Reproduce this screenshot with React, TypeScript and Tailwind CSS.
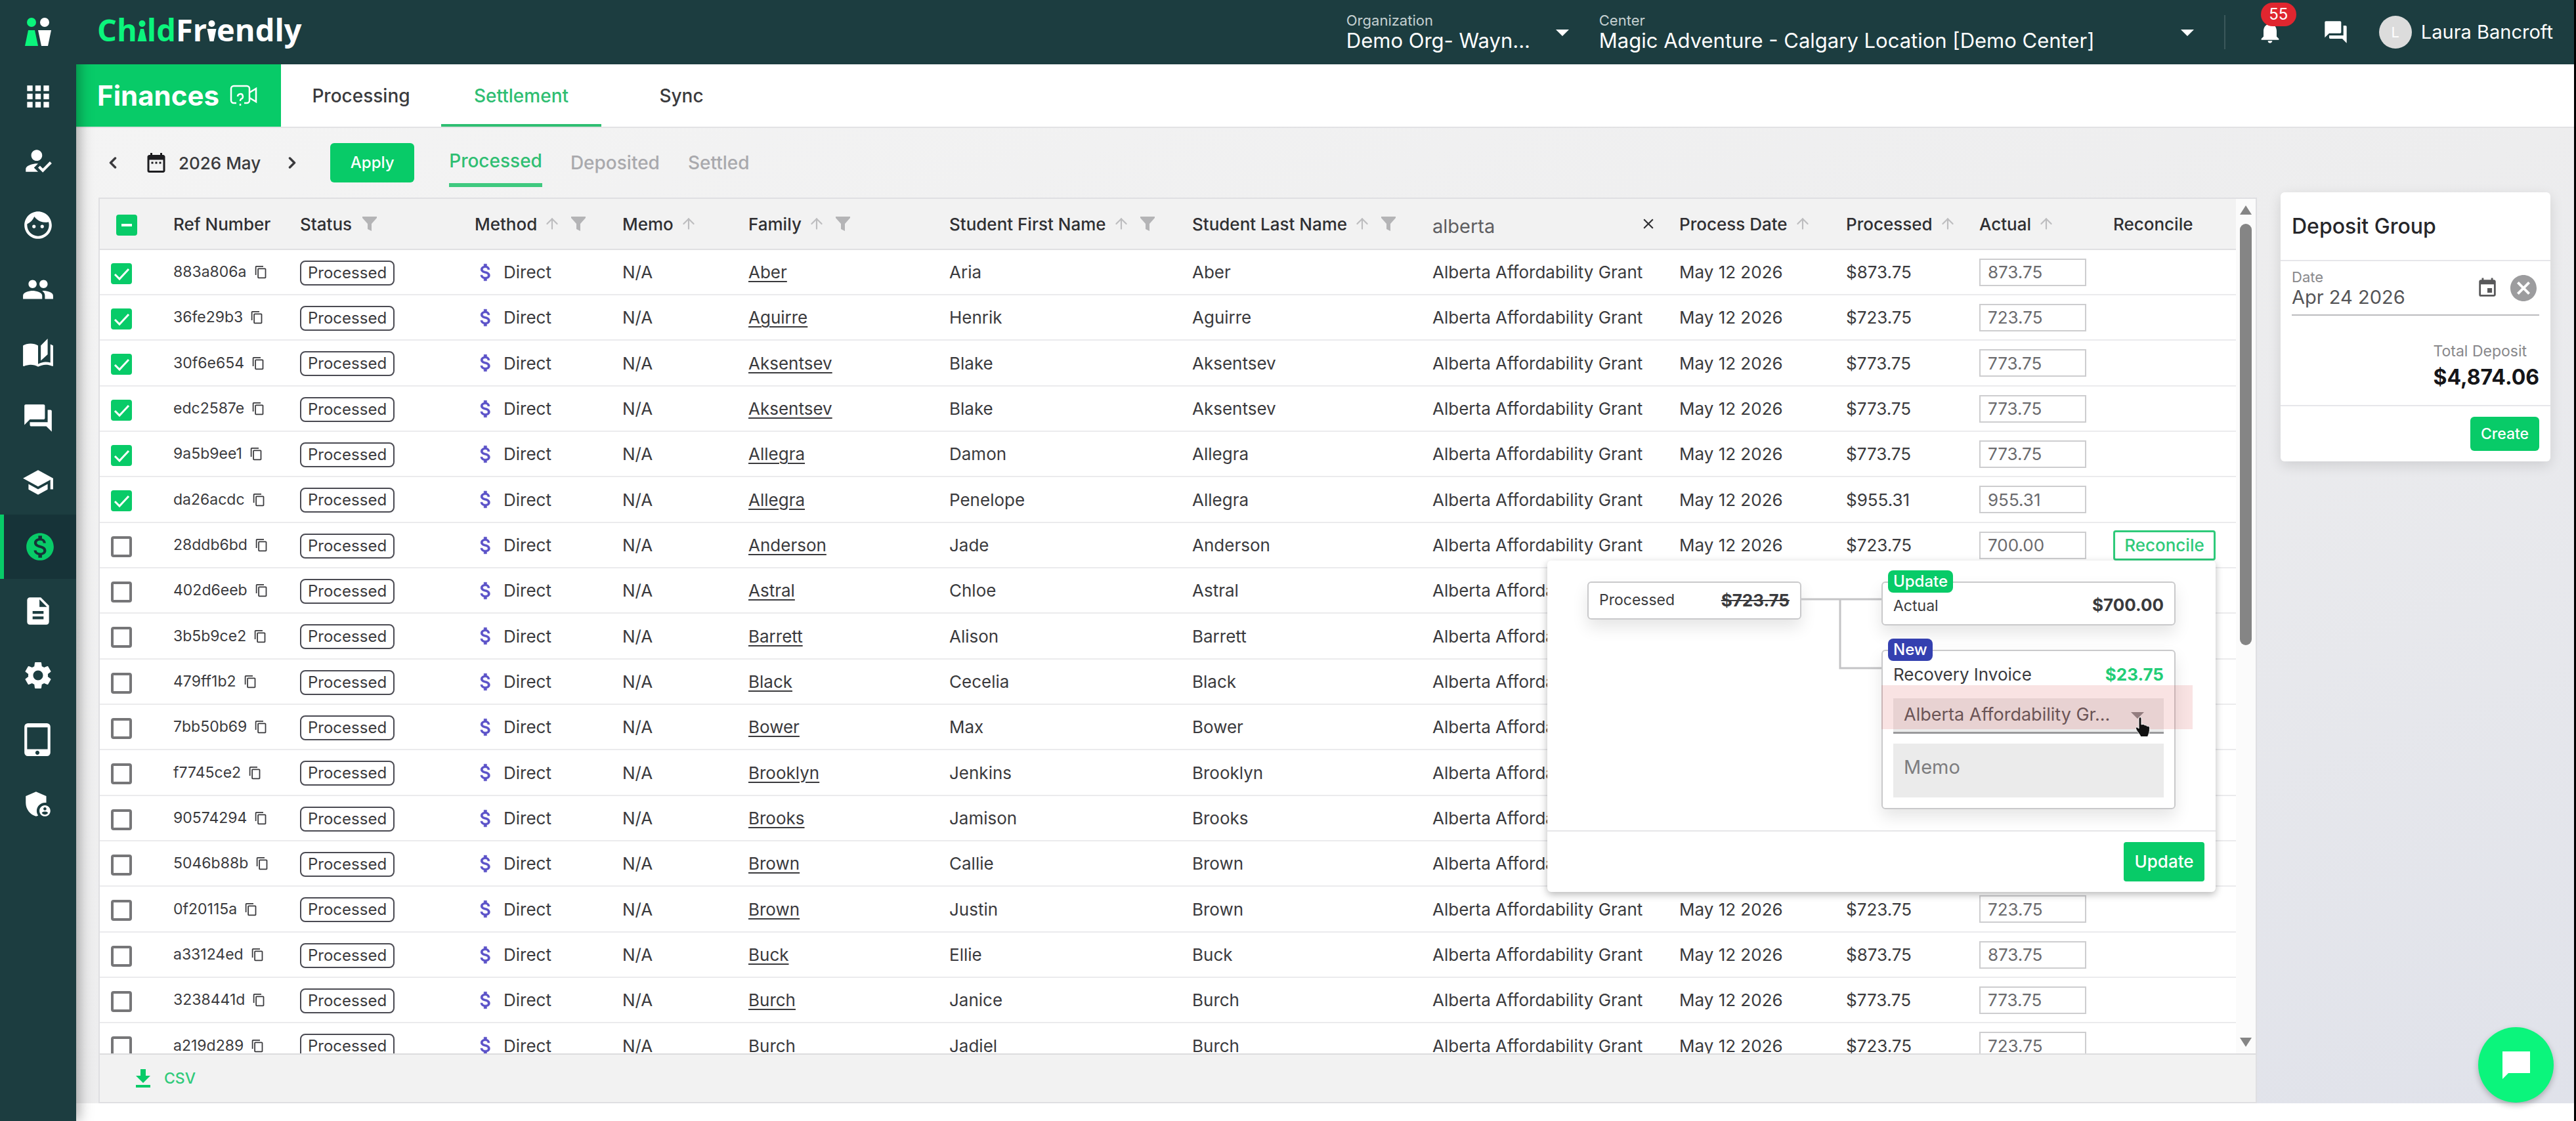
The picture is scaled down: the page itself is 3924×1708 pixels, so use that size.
import { useState } from "react";
import type { ReactNode } from "react";
import {
  MdAdminPanelSettings,
  MdApps,
  MdArrowDropDown,
  MdAutoStories,
  MdCancel,
  MdClose,
  MdContentCopy,
  MdDateRange,
  MdDescription,
  MdEvent,
  MdFace,
  MdForum,
  MdHowToReg,
  MdMonetizationOn,
  MdNotifications,
  MdPeople,
  MdSchool,
  MdSettings,
  MdTabletMac,
} from "react-icons/md";
import { ArrowUp, ChevronLeft, ChevronRight } from "lucide-react";

const navItems = [
  { label: "Dashboard", icon: MdApps },
  { label: "Attendance", icon: MdHowToReg },
  { label: "Children", icon: MdFace },
  { label: "Families", icon: MdPeople },
  { label: "Programs", icon: MdAutoStories },
  { label: "Messages", icon: MdForum },
  { label: "Education", icon: MdSchool },
  { label: "Finances", icon: MdMonetizationOn, active: true },
  { label: "Reports", icon: MdDescription },
  { label: "Settings", icon: MdSettings },
  { label: "Devices", icon: MdTabletMac },
  { label: "Admin", icon: MdAdminPanelSettings },
];

type Row = {
  id: string;
  family: string;
  first: string;
  processed: string;
  actual?: string;
  checked?: boolean;
};

const rows: Row[] = [
  { id: "883a806a", family: "Aber", first: "Aria", processed: "873.75", checked: true },
  { id: "36fe29b3", family: "Aguirre", first: "Henrik", processed: "723.75", checked: true },
  { id: "30f6e654", family: "Aksentsev", first: "Blake", processed: "773.75", checked: true },
  { id: "edc2587e", family: "Aksentsev", first: "Blake", processed: "773.75", checked: true },
  { id: "9a5b9ee1", family: "Allegra", first: "Damon", processed: "773.75", checked: true },
  { id: "da26acdc", family: "Allegra", first: "Penelope", processed: "955.31", checked: true },
  { id: "28ddb6bd", family: "Anderson", first: "Jade", processed: "723.75", actual: "700.00" },
  { id: "402d6eeb", family: "Astral", first: "Chloe", processed: "723.75" },
  { id: "3b5b9ce2", family: "Barrett", first: "Alison", processed: "723.75" },
  { id: "479ff1b2", family: "Black", first: "Cecelia", processed: "723.75" },
  { id: "7bb50b69", family: "Bower", first: "Max", processed: "723.75" },
  { id: "f7745ce2", family: "Brooklyn", first: "Jenkins", processed: "723.75" },
  { id: "90574294", family: "Brooks", first: "Jamison", processed: "723.75" },
  { id: "5046b88b", family: "Brown", first: "Callie", processed: "723.75" },
  { id: "0f20115a", family: "Brown", first: "Justin", processed: "723.75" },
  { id: "a33124ed", family: "Buck", first: "Ellie", processed: "873.75" },
  { id: "3238441d", family: "Burch", first: "Janice", processed: "773.75" },
  { id: "a219d289", family: "Burch", first: "Jadiel", processed: "723.75" },
];

function People({ className }: { className?: string }) {
  return (
    <svg viewBox="0 0 42 46" className={className} aria-hidden="true">
      <circle cx="11" cy="8" r="7" fill="#0bf57c" />
      <path d="M6 20h10l5 24H1z" fill="#0bf57c" />
      <circle cx="31" cy="8" r="7" fill="#fff" />
      <path d="M21 20h20l-5 24H26z" fill="#fff" />
    </svg>
  );
}

function Wordmark() {
  return (
    <div className="flex items-baseline pb-2 font-['Open_Sans',sans-serif] text-[47px] leading-[56px] font-bold text-white">
      <span className="text-[#0bf57c]">Ch</span>
      <svg viewBox="0 0 15 32" className="h-[32px] w-[15px]" aria-hidden="true">
        <circle cx="7.5" cy="5" r="5" fill="#0bf57c" />
        <path d="M5 13h5l4.500 19H.5z" fill="#0bf57c" />
      </svg>
      <span className="text-[#0bf57c]">ld</span>
      <span>Fr</span>
      <svg viewBox="0 0 15 32" className="h-[32px] w-[15px]" aria-hidden="true">
        <circle cx="7.5" cy="5" r="5" fill="#fff" />
        <path d="M.5 13h14L10.500 32h-6z" fill="#fff" />
      </svg>
      <span>endly</span>
    </div>
  );
}

function Dollar() {
  return (
    <svg viewBox="0 0 24 24" className="h-[34px] w-[34px] shrink-0" fill="#5b52c8" stroke="#5b52c8" strokeWidth="0.4" aria-hidden="true">
      <path d="M11.800 10.900c-2.270-.59-3-1.200-3-2.150 0-1.090 1.010-1.850 2.700-1.850 1.780 0 2.440.85 2.500 2.100h2.210c-.07-1.720-1.120-3.300-3.210-3.810V3h-3v2.160c-1.940.42-3.500 1.680-3.500 3.610 0 2.310 1.910 3.460 4.700 4.130 2.500.6 3 1.480 3 2.410 0 .69-.49 1.790-2.700 1.790-2.060 0-2.870-.92-2.980-2.100h-2.200c.12 2.190 1.760 3.420 3.680 3.830V21h3v-2.150c1.950-.37 3.500-1.500 3.500-3.550 0-2.840-2.430-3.810-4.700-4.400z" />
    </svg>
  );
}

function Funnel() {
  return (
    <svg viewBox="0 0 22 22" className="h-[22px] w-[22px] shrink-0" fill="#b4b4b6" aria-hidden="true">
      <path d="M0 0h22v2l-8 9v11l-6-3v-8L0 2z" />
    </svg>
  );
}

function Heading({ children, sort, filter }: { children: ReactNode; sort?: boolean; filter?: boolean }) {
  return (
    <th scope="col" className="p-0 text-left font-medium whitespace-nowrap">
      <span className="flex items-center">
        {children}
        {sort && <ArrowUp className="ml-2.5 h-[26px] w-[26px] shrink-0 text-[#bdbdbf]" strokeWidth={2} />}
        {filter && (
          <span className="ml-4">
            <Funnel />
          </span>
        )}
      </span>
    </th>
  );
}

function Checkbox({ label, checked, mixed, onChange }: { label: string; checked: boolean; mixed?: boolean; onChange: () => void }) {
  return (
    <span className="inline-grid align-middle">
      <input
        type="checkbox"
        aria-label={label}
        checked={checked}
        onChange={onChange}
        className="h-8 w-8 appearance-none rounded-[4px] border-4 border-[#767678] [grid-area:1/1] checked:border-[#08cb68] checked:bg-[#08cb68]"
      />
      {checked && (
        <svg viewBox="0 0 32 32" className="pointer-events-none h-8 w-8 [grid-area:1/1]" fill="none" stroke="#fff" strokeWidth="3" aria-hidden="true">
          {mixed ? <path d="M8 16h16" strokeWidth="4" /> : <path d="M6 17l7 7L27 9" />}
        </svg>
      )}
    </span>
  );
}

function Sidebar() {
  return (
    <nav className="relative z-10 flex w-[116px] shrink-0 flex-col bg-[#1c3d40] text-white shadow-[4px_0_20px_rgba(0,0,0,0.35)]">
      <a href="#home" aria-label="Home" className="flex h-[98px] items-center justify-center">
        <People className="h-[46px] w-[42px]" />
      </a>
      {navItems.map(({ label, icon: Icon, active }) => (
        <a
          key={label}
          href={`#${label.toLowerCase()}`}
          aria-label={label}
          className={`flex h-[98px] items-center justify-center ${
            active ? "border-l-[6px] border-[#08cb68] bg-[#163338] text-[#08cb68]" : ""
          }`}
        >
          <Icon className="h-[50px] w-[50px]" />
        </a>
      ))}
    </nav>
  );
}

function HeaderSelect({ id, label, value, className }: { id: string; label: string; value: string; className: string }) {
  return (
    <div className={`flex items-center ${className}`}>
      <div className="flex min-w-0 flex-1 flex-col">
        <label htmlFor={id} className="text-[22px] leading-[26px] text-[#c5d0d1]">
          {label}
        </label>
        <select id={id} className="w-full appearance-none bg-transparent text-[31px] leading-[36px] outline-none">
          <option>{value}</option>
        </select>
      </div>
      <MdArrowDropDown className="h-[48px] w-[48px]" />
    </div>
  );
}

function TopBar() {
  return (
    <header className="relative z-20 flex h-[98px] shrink-0 items-center bg-[#1c3d40] pr-8 pl-8 text-white">
      <Wordmark />
      <div className="flex-1" />
      <HeaderSelect id="organization" label="Organization" value="Demo Org- Wayn..." className="w-[353px]" />
      <HeaderSelect id="center" label="Center" value="Magic Adventure - Calgary Location [Demo Center]" className="ml-8 w-[920px]" />
      <div className="ml-8 h-[52px] w-0.5 bg-[#3b585b]" />
      <button aria-label="Notifications" className="relative ml-[48px]">
        <MdNotifications className="h-[40px] w-[40px]" />
        <span className="absolute -top-[25px] left-[6px] flex h-[36px] w-[54px] items-center justify-center rounded-full bg-[#e0262f] text-[24px]">
          55
        </span>
      </button>
      <button aria-label="Chat" className="ml-[60px]">
        <MdForum className="h-[40px] w-[40px]" />
      </button>
      <button className="ml-[46px] flex items-center gap-[14px] text-[29px] whitespace-nowrap">
        <span className="flex h-[50px] w-[50px] items-center justify-center rounded-full bg-[#dcdcdc] text-[22px]">L</span>
        Laura Bancroft
      </button>
    </header>
  );
}

function PageTabs() {
  return (
    <div className="flex h-[97px] shrink-0 border-b-2 border-[#e2e2e4] bg-white text-[28px] font-medium text-[#3a3a3d]">
      <h1 className="flex w-[312px] items-center gap-4 bg-[#08cb68] pl-8 text-[42px] font-bold text-white">
        Finances
        <svg viewBox="0 0 42 34" className="h-[34px] w-[42px]" fill="none" stroke="#fff" strokeWidth="2.500" aria-hidden="true">
          <path d="M10 28H6a4 4 0 0 1-4-4V6a4 4 0 0 1 4-4h20a4 4 0 0 1 4 4v18a4 4 0 0 1-4 4h-4" />
          <path d="M30 12l10-6v20l-10-6" />
          <path d="M12 18a4 4 0 1 1 5 4c-1 .5-1 1-1 3M16 29v3" />
        </svg>
      </h1>
      <nav className="flex">
        <a href="#processing" className="flex w-[244px] items-center justify-center">
          Processing
        </a>
        <a href="#settlement" className="flex w-[244px] items-center justify-center border-y-4 border-t-transparent border-b-[#2fbe72] text-[#2fbe72]">
          Settlement
        </a>
        <a href="#sync" className="flex w-[244px] items-center justify-center">
          Sync
        </a>
      </nav>
    </div>
  );
}

function Toolbar() {
  return (
    <div className="flex h-[106px] shrink-0 items-center text-[26px] font-medium text-[#3a3a3d]">
      <button aria-label="Previous month" className="ml-2">
        <ChevronLeft className="h-[28px] w-[28px]" strokeWidth={3} />
      </button>
      <button className="ml-[34px] flex items-center gap-4">
        <MdDateRange className="h-[36px] w-[36px] text-[#1d1d20]" />
        2026 May
      </button>
      <button aria-label="Next month" className="ml-[34px]">
        <ChevronRight className="h-[28px] w-[28px]" strokeWidth={3} />
      </button>
      <button className="ml-[44px] h-[60px] w-[128px] rounded-[6px] bg-[#08cb68] text-[24px] text-white">Apply</button>
      <div className="ml-[53px] flex gap-[43px] text-[28px] text-[#a9a9ad]">
        <button className="mt-[8px] border-b-[6px] border-[#3fc97f] pt-[2px] pb-[10px] leading-[48px] text-[#2fbe72]">Processed</button>
        <button>Deposited</button>
        <button>Settled</button>
      </div>
    </div>
  );
}

function ReconcilePanel() {
  return (
    <div className="absolute top-full right-0 z-10 w-[1018px] rounded-[6px] bg-white shadow-[0_4px_12px_rgba(0,0,0,0.28)]">
      <div className="flex items-start px-[61px] py-[32px]">
        <div className="flex h-[58px] w-[326px] items-center justify-between rounded-[6px] border-2 border-[#c9c9cb] px-4 text-[23px] shadow-[0_12px_24px_rgba(0,0,0,0.1)]">
          <span>Processed</span>
          <span className="text-[26px] font-bold line-through">$723.75</span>
        </div>
        <svg viewBox="0 0 122 140" className="h-[140px] w-[122px]" fill="none" stroke="#c4c4c6" strokeWidth="3" aria-hidden="true">
          <path d="M0 27h122M59 27v105h63" />
        </svg>
        <div className="flex flex-1 flex-col gap-[37px]">
          <div className="relative flex h-[67px] items-end justify-between rounded-[6px] border-2 border-[#c9c9cb] px-4 pb-2.5 shadow-[0_12px_24px_rgba(0,0,0,0.1)]">
            <span className="absolute -top-[19px] left-2 rounded-[8px] bg-[#08cb68] px-2 text-[24px] leading-[34px] font-medium text-white">Update</span>
            <span className="text-[23px]">Actual</span>
            <span className="text-[26px] font-bold">$700.00</span>
          </div>
          <div className="relative rounded-[6px] border-2 border-[#c9c9cb] px-4 pt-[18px] pb-[16px] shadow-[0_12px_24px_rgba(0,0,0,0.1)]">
            <span className="absolute -top-[19px] left-2 rounded-[8px] bg-[#3440b0] px-2 text-[24px] leading-[34px] font-medium text-white">New</span>
            <div className="flex items-center justify-between text-[26px] leading-[36px]">
              <span>Recovery Invoice</span>
              <span className="font-bold text-[#22cd76]">$23.75</span>
            </div>
            <div className="mt-[18px] flex h-[54px] items-center border-b-[3px] border-[#9a9a9c] bg-[#ebebeb] pr-4 pl-4">
              <select aria-label="Recovery payer" className="min-w-0 flex-1 appearance-none bg-transparent text-[27px] text-[#58585a] outline-none">
                <option>Alberta Affordability Gr...</option>
              </select>
              <MdArrowDropDown className="h-[48px] w-[48px] text-[#88888a]" />
            </div>
            <textarea
              aria-label="Memo"
              placeholder="Memo"
              className="mt-[15px] block h-[82px] w-full resize-none bg-[#ebebeb] px-4 py-[16px] text-[29px] leading-[40px] outline-none placeholder:text-[#7d7d7f]"
            />
            <div className="pointer-events-none absolute top-[52px] -right-[28px] -left-[2px] h-[67px] bg-[#d84040]/15" />
            <svg viewBox="0 0 24 32" className="pointer-events-none absolute top-[100px] right-[36px] h-[32px] w-[24px]" aria-hidden="true">
              <path
                d="M6 3c0-3 4-3 4 0v9l2-.5c2 0 2.500 1 3 1.500 2-.5 3 .5 3.500 1.500 2-.5 4 0 4 3 0 6-1 8-3 13H9c-2-5-7-9-7.500-13 0-2 2-2 4.500.5z"
                fill="#111"
                stroke="#fff"
                strokeWidth="1"
              />
            </svg>
          </div>
        </div>
      </div>
      <div className="flex justify-end border-t-2 border-[#e6e6e8] px-[17px] py-[16px]">
        <button className="h-[60px] w-[123px] rounded-[4px] bg-[#08cb68] text-[26px] font-medium text-white">Update</button>
      </div>
    </div>
  );
}

function SettlementTable() {
  const [selected, setSelected] = useState(rows.filter((r) => r.checked).map((r) => r.id));
  const [filter, setFilter] = useState("alberta");

  const toggle = (id: string) =>
    setSelected((prev) => (prev.includes(id) ? prev.filter((p) => p !== id) : [...prev, id]));

  return (
    <section className="flex min-w-0 flex-1 flex-col border-2 border-[#dfdfe2] bg-white">
      <div className="flex min-h-0 flex-1 overflow-hidden">
        <div className="min-w-0 flex-1">
          <table className="w-full table-fixed border-collapse text-[26px] text-[#3a3a3d]">
            <colgroup>
              <col className="w-[112px]" />
              <col className="w-[193px]" />
              <col className="w-[266px]" />
              <col className="w-[225px]" />
              <col className="w-[192px]" />
              <col className="w-[306px]" />
              <col className="w-[370px]" />
              <col className="w-[366px]" />
              <col className="w-[376px]" />
              <col className="w-[254px]" />
              <col className="w-[203px]" />
              <col className="w-[204px]" />
              <col />
            </colgroup>
            <thead>
              <tr className="h-[77px] border-b-2 border-[#e0e0e2] bg-[#f2f2f2] text-[#2f2f32]">
                <th scope="col" className="p-0 pl-[25px] text-left">
                  <Checkbox
                    label="Select all"
                    checked={selected.length > 0}
                    mixed={selected.length < rows.length}
                    onChange={() => setSelected(selected.length ? [] : rows.map((r) => r.id))}
                  />
                </th>
                <Heading>Ref Number</Heading>
                <Heading filter>Status</Heading>
                <Heading sort filter>Method</Heading>
                <Heading sort>Memo</Heading>
                <Heading sort filter>Family</Heading>
                <Heading sort filter>Student First Name</Heading>
                <Heading sort filter>Student Last Name</Heading>
                <th scope="col" className="p-0 text-left font-normal">
                  <span className="flex items-center pr-[34px]">
                    <input
                      aria-label="Filter by payer"
                      value={filter}
                      onChange={(e) => setFilter(e.target.value)}
                      className="min-w-0 flex-1 bg-transparent pt-2 text-[29px] text-[#5e5e61] outline-none"
                    />
                    <button aria-label="Clear filter" onClick={() => setFilter("")}>
                      <MdClose className="h-[26px] w-[26px]" />
                    </button>
                  </span>
                </th>
                <Heading sort>Process Date</Heading>
                <Heading sort>Processed</Heading>
                <Heading sort>Actual</Heading>
                <Heading>Reconcile</Heading>
              </tr>
            </thead>
            <tbody>
              {rows.map((row) => (
                <tr key={row.id} className="h-[69px] border-b-2 border-[#ebebed] nth-[3n]:h-[70px]">
                  <td className="p-0 pl-[17px]">
                    <Checkbox label={`Select ${row.id}`} checked={selected.includes(row.id)} onChange={() => toggle(row.id)} />
                  </td>
                  <td className="p-0">
                    <span className="flex items-center gap-[11px] text-[23px]">
                      {row.id}
                      <button aria-label={`Copy ${row.id}`}>
                        <MdContentCopy className="h-[21px] w-[21px]" />
                      </button>
                    </span>
                  </td>
                  <td className="p-0">
                    <span className="inline-block rounded-[8px] border-2 border-[#4a4a52] px-[10px] align-middle text-[24px] leading-[34px]">Processed</span>
                  </td>
                  <td className="p-0">
                    <span className="flex items-center gap-[10px]">
                      <Dollar />
                      Direct
                    </span>
                  </td>
                  <td className="p-0">N/A</td>
                  <td className="p-0">
                    <a href="#family" className="underline decoration-2 underline-offset-4">
                      {row.family}
                    </a>
                  </td>
                  <td className="p-0">{row.first}</td>
                  <td className="p-0">{row.family}</td>
                  <td className="p-0 whitespace-nowrap">Alberta Affordability Grant</td>
                  <td className="p-0">May 12 2026</td>
                  <td className="p-0">${row.processed}</td>
                  <td className="p-0">
                    <input
                      aria-label={`Actual ${row.id}`}
                      defaultValue={row.actual ?? row.processed}
                      className="block h-[42px] w-[163px] border-2 border-[#cdcdcf] bg-white px-[11px] text-[26px] text-[#6b6b6e] outline-none"
                    />
                  </td>
                  <td className="p-0">
                    {row.actual && (
                      <div className="relative w-[156px]">
                        <button className="block h-[46px] w-full rounded-[4px] border-[3px] border-[#2fca7a] bg-white text-[26px] font-medium text-[#2fca7a]">
                          Reconcile
                        </button>
                        <ReconcilePanel />
                      </div>
                    )}
                  </td>
                </tr>
              ))}
            </tbody>
          </table>
        </div>
        <div className="flex w-[30px] shrink-0 flex-col items-center bg-[#fbfbfb] py-[10px]">
          <svg viewBox="0 0 18 14" className="h-[14px] w-[18px]" fill="#858585" aria-hidden="true">
            <path d="M9 0l9 14H0z" />
          </svg>
          <div className="mt-[14px] h-[642px] w-[18px] rounded-full bg-[#858585]" />
          <div className="flex-1" />
          <svg viewBox="0 0 18 14" className="h-[14px] w-[18px]" fill="#858585" aria-hidden="true">
            <path d="M9 14l9-14H0z" />
          </svg>
        </div>
      </div>
      <footer className="flex h-[74px] shrink-0 items-center border-t-2 border-[#dcdcde] bg-[#f2f2f2] pl-[54px]">
        <button className="flex items-center gap-[20px] text-[23px] font-medium text-[#2fca7a]">
          <svg viewBox="0 0 24 28" className="h-[28px] w-[24px]" fill="#08cb68" aria-hidden="true">
            <path d="M8 0h8v10h7L12 21 1 10h7zM1 24h22v4H1z" />
          </svg>
          CSV
        </button>
      </footer>
    </section>
  );
}

function DepositGroup() {
  return (
    <aside className="mt-[98px] w-[411px] shrink-0 self-start rounded-[6px] bg-white text-[#3a3a3d] shadow-[0_6px_20px_rgba(0,0,0,0.12)]">
      <h2 className="flex h-[105px] items-center border-b-2 border-[#e6e6ea] px-[17px] text-[32px] font-medium text-[#26262a]">Deposit Group</h2>
      <div className="px-[17px] pt-[10px] pb-[21px]">
        <div className="flex items-center border-b-2 border-[#bcbcbe] pb-[9px]">
          <div className="flex min-w-0 flex-1 flex-col">
            <label htmlFor="deposit-date" className="text-[22px] leading-[28px] text-[#88888b]">
              Date
            </label>
            <input id="deposit-date" defaultValue="Apr 24 2026" className="w-full bg-transparent text-[29px] leading-[34px] text-[#555558] outline-none" />
          </div>
          <button aria-label="Pick date">
            <MdEvent className="h-[34px] w-[34px] text-[#58585a]" />
          </button>
          <button aria-label="Clear date" className="ml-[14px]">
            <MdCancel className="h-[48px] w-[48px] text-[#9c9c9e]" />
          </button>
        </div>
        <div className="mt-[39px] flex justify-end">
          <div>
            <div className="text-[23px] leading-[30px] text-[#88888b]">Total Deposit</div>
            <div className="mt-[4px] text-[32px] leading-[42px] font-bold text-[#151518]">$4,874.06</div>
          </div>
        </div>
      </div>
      <div className="flex justify-end border-t-2 border-[#e6e6ea] px-[17px] py-[16px]">
        <button className="h-[52px] w-[105px] rounded-[6px] bg-[#08cb68] text-[23px] font-medium text-white">Create</button>
      </div>
    </aside>
  );
}

export default function App() {
  return (
    <div className="flex h-screen overflow-hidden border-r-[3px] border-black bg-white font-['Inter',sans-serif]">
      <Sidebar />
      <div className="flex min-w-0 flex-1 flex-col">
        <TopBar />
        <PageTabs />
        <main className="mb-[27px] flex min-h-0 flex-1 gap-[36px] bg-linear-to-br from-[#f4f4f4] via-[#ededee] to-[#e0e2ea] pr-[36px] pl-[34px]">
          <div className="flex min-w-0 flex-1 flex-col">
            <Toolbar />
            <div className="flex min-h-0 flex-1">
              <SettlementTable />
            </div>
          </div>
          <DepositGroup />
        </main>
      </div>
      <button
        aria-label="Open chat"
        className="fixed right-[34px] bottom-[28px] z-30 flex h-[115px] w-[115px] items-center justify-center rounded-full bg-[#0bf57c] shadow-[0_4px_10px_rgba(0,0,0,0.25)]"
      >
        <svg viewBox="0 0 42 42" className="h-[42px] w-[42px]" fill="#fff" aria-hidden="true">
          <path d="M0 0h42v33H9l-9 9z" />
        </svg>
      </button>
    </div>
  );
}
